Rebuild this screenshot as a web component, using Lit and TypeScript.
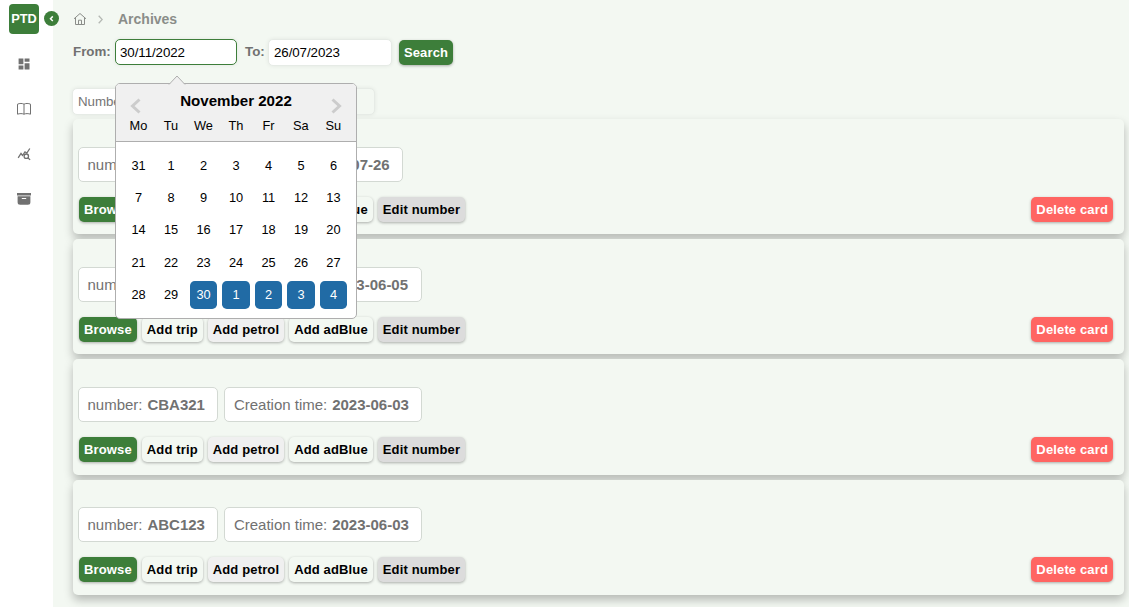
import { LitElement, html, css, svg } from "lit";
import { customElement, property } from "lit/decorators.js";
import { classMap } from "lit/directives/class-map.js";

@customElement("side-nav")
class SideNav extends LitElement {
  static styles = css`
    :host { display: block; position: relative; width: 53px; background: #fff; flex: none; }
    .bar { display: flex; flex-direction: column; align-items: center; width: 48px; padding-top: 4px; }
    .logo { width: 30px; height: 30px; border-radius: 4px; background: #3d7e3a; color: #fff; font-weight: bold; font-size: 12.8px; line-height: 29px; text-align: center; margin-bottom: 22px; }
    .toggle { position: absolute; left: 44px; top: 11px; width: 15px; height: 15px; }
    .item { width: 16px; height: 16px; margin-bottom: 29px; }
    svg { display: block; overflow: visible; }
  `;
  render() {
    const icons = [
      svg`<g fill="#717171"><path d="M2.600 2.500h4.800v5.700H2.600zM8.600 2.500h4.900v3.300H8.600zM2.600 9.600h4.800v3.900H2.600zM8.600 7.200h4.900v6.300H8.600z"/></g>`,
      svg`<g fill="none" stroke="#717171"><path d="M8 3.200C6.500 2.200 3.500 2.200 1.500 3.200v10c2-.8 5-.8 6.500 0 1.500-.8 4.500-.8 6.500 0v-10c-2-1-5-1-6.500 0zM8 3.200v10"/></g>`,
      svg`<g fill="none" stroke="#717171" stroke-width="1.300"><path d="M2.200 11.800 5 7.500l1.500 2L9 5.800l1.800 1.200 3-4.500"/><circle cx="10.300" cy="10.200" r="2.200"/><path d="m11.900 11.700 2.200 2.200"/></g>`,
      svg`<path fill="#717171" d="M1 2h14v2.600H1zM1.600 5.300h12.800v6a2.500 2.500 0 0 1-2.500 2.500H4.100a2.500 2.500 0 0 1-2.500-2.500z"/><path stroke="#fff" d="M5.800 7.500h4.400"/>`,
    ];
    return html`<nav class="bar">
        <div class="logo">PTD</div>
        ${icons.map((i) => html`<div class="item"><svg width="16" height="16" viewBox="0 0 16 16">${i}</svg></div>`)}
      </nav>
      <div class="toggle"><svg width="15" height="15"><circle cx="7.500" cy="7.500" r="7.500" fill="#3d7e3a"/><path d="M8.800 5.400 6.500 7.700l2.300 2.300" fill="none" stroke="#fff" stroke-width="1.500"/></svg></div>`;
  }
}

@customElement("archive-card")
class ArchiveCard extends LitElement {
  @property() number = "";
  @property() created = "";
  static styles = css`
    :host { display: block; box-sizing: border-box; height: 115.2px; padding: 27.8px 11px 0 5px; border-radius: 5px; background: #f3f8f2; box-shadow: 0 5px 10px rgba(0, 0, 0, .25); }
    .tags { display: flex; gap: 6px; }
    .tag { box-sizing: border-box; height: 35px; border: 1px solid #d3d9d3; border-radius: 5px; background: #fff; color: #717171; font-size: 15px; line-height: 34px; padding: 0 12.5px 0 8.5px; white-space: nowrap; }
    b { margin-left: .7px; }
    .actions { display: flex; gap: 5px; margin: 15px 0 0 1px; }
    .btn { height: 25px; border-radius: 5px; padding: 0 5px; font-weight: bold; font-size: 13px; line-height: 25.5px; letter-spacing: .14px; color: #000; white-space: nowrap; box-shadow: 0 1px 3px rgba(0, 0, 0, .3); }
    .browse { background: #3d7e3a; color: #fff; }
    .petrol { background: #f0f0f0; }
    .edit { background: #dcdcdc; }
    .delete { background: #ff6562; color: #fff; margin-left: auto; }
  `;
  render() {
    return html`<div class="tags">
        <div class="tag">number: <b>${this.number}</b></div>
        <div class="tag">Creation time: <b>${this.created}</b></div>
      </div>
      <div class="actions">
        <div class="btn browse">Browse</div>
        <div class="btn">Add trip</div>
        <div class="btn petrol">Add petrol</div>
        <div class="btn">Add adBlue</div>
        <div class="btn edit">Edit number</div>
        <div class="btn delete">Delete card</div>
      </div>`;
  }
}

@customElement("date-popup")
class DatePopup extends LitElement {
  static styles = css`
    :host { display: block; box-sizing: border-box; width: 242px; border: 1px solid #aeaeae; border-radius: 5px; background: #fff; color: #000; font-size: 12.8px; }
    .head { position: relative; height: 57px; background: #f0f0f0; border-bottom: 1px solid #aeaeae; border-radius: 4px 4px 0 0; }
    .tip { position: absolute; left: 52px; top: -9px; }
    .prev, .next { position: absolute; top: 14px; }
    .prev { left: 13px; }
    .next { right: 13.500px; }
    .month { padding-top: 8px; text-align: center; font-weight: bold; font-size: 15.1px; line-height: 17px; }
    .row { display: grid; grid-template-columns: repeat(7, 27.2px); column-gap: 5.3px; padding-left: 8.900px; line-height: 27.2px; text-align: center; }
    .names { padding-top: 3px; }
    .days { row-gap: 5.250px; padding-top: 10px; padding-bottom: 9.200px; letter-spacing: -.1px; }
    .on { background: #216ba5; color: #fff; border-radius: 4.8px; }
    svg { display: block; }
  `;
  render() {
    const days = [31, ...Array.from({ length: 30 }, (_, i) => i + 1), 1, 2, 3, 4];
    return html`<div class="head">
        <svg class="tip" width="18" height="10"><path d="M1 9.500 9 1l8 8.500" fill="#f0f0f0" stroke="#aeaeae"/></svg>
        <svg class="prev" width="13" height="16"><path d="m10.500 1.500-7 6.500 7 6.500" fill="none" stroke="#ccc" stroke-width="3"/></svg>
        <svg class="next" width="13" height="16"><path d="m2.500 1.500 7 6.500-7 6.500" fill="none" stroke="#ccc" stroke-width="3"/></svg>
        <div class="month">November 2022</div>
        <div class="row names">${["Mo", "Tu", "We", "Th", "Fr", "Sa", "Su"].map((d) => html`<span>${d}</span>`)}</div>
      </div>
      <div class="row days">${days.map((d, i) => html`<span class=${classMap({ on: i >= 30 })}>${d}</span>`)}</div>`;
  }
}

@customElement("app-root")
class AppRoot extends LitElement {
  static styles = css`
    :host { display: flex; height: 607px; overflow: hidden; background: #f3f8f2; font-family: "Liberation Sans", Arial, sans-serif; }
    main { flex: 1; min-width: 0; padding: 0 5px 0 20px; }
    .crumbs { display: flex; align-items: center; height: 38px; color: #8a8d89; font-size: 14px; font-weight: bold; }
    .home { margin-right: 11px; }
    .sep { margin-right: 15px; }
    .dates { display: flex; height: 27px; margin-top: 1px; color: #717171; font-size: 13.330px; font-weight: bold; line-height: 26px; }
    .from { width: 42px; }
    .to { width: 23px; margin-left: 8px; }
    .field { position: relative; box-sizing: border-box; height: 27px; border: 1px solid #e6ebe6; border-radius: 5px; background: #fff; color: #000; font-size: 13.330px; letter-spacing: -.08px; font-weight: normal; line-height: 25px; padding: 0 5px; box-shadow: 0 0 4px rgba(0, 0, 0, .07); }
    .date { width: 124px; }
    .active { width: 122px; height: 26px; border: 1px solid #3d7e3a; padding: 0 4px; line-height: 25px; }
    .popup { position: absolute; left: -1px; top: 42.500px; z-index: 2; letter-spacing: 0; }
    .search { width: 54px; height: 25px; margin: 1px 0 0 7px; border-radius: 5px; background: #3d7e3a; color: #fff; text-align: center; line-height: 25.500px; font-size: 13px; letter-spacing: .14px; box-shadow: 0 1px 3px rgba(0, 0, 0, .3); }
    .filters { display: flex; gap: 5px; margin: 22px 0 0 -1px; }
    .num { width: 149px; color: #757575; }
    .time { width: 149px; background: #f3f8f2; }
    .list { display: flex; flex-direction: column; gap: 5px; margin-top: 4px; }
  `;
  render() {
    const cards = [
      ["AB12", "2023-07-26"],
      ["ABE123", "2023-06-05"],
      ["CBA321", "2023-06-03"],
      ["ABC123", "2023-06-03"],
    ];
    return html`<side-nav></side-nav>
      <main>
        <div class="crumbs">
          <svg class="home" width="14" height="14" viewBox="0 0 14 14" fill="none" stroke="#8a8d89"><path d="M1 6.800 7 1.500l6 5.300M2.500 5.800v6.700h9V5.800M5.500 12.500V8.200h3v4.300"/></svg>
          <svg class="sep" width="5" height="9" fill="none" stroke="#b5b9b4" stroke-width="1.300"><path d="M.7.700 4.200 4.500.7 8.300"/></svg>
          <span>Archives</span>
        </div>
        <div class="dates">
          <span class="from">From:</span>
          <div class="field active">30/11/2022<date-popup class="popup"></date-popup></div>
          <span class="to">To:</span>
          <div class="field date">26/07/2023</div>
          <div class="search">Search</div>
        </div>
        <div class="filters"><div class="field num">Number</div><div class="field time"></div></div>
        <div class="list">${cards.map(([n, d]) => html`<archive-card .number=${n} .created=${d}></archive-card>`)}</div>
      </main>`;
  }
}
